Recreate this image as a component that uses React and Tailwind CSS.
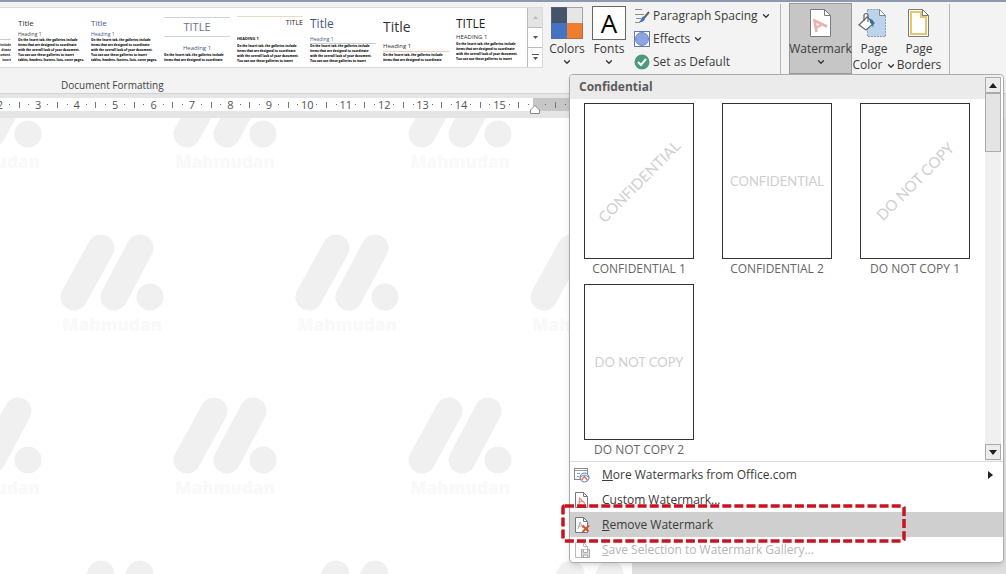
import { ChevronDown } from 'lucide-react';

const BODY = [
  'On the Insert tab, the galleries include',
  'items that are designed to coordinate',
  'with the overall look of your document.',
  'You can use these galleries to insert',
  'tables, headers, footers, lists, cover pages,',
];

const STYLES = [
  { title: 'Title', heading: 'Heading 1', lines: 5, titleCls: 'text-[8px] leading-[15px] text-[#333]', headCls: 'text-[5px] leading-[8px] text-[#444]', pad: 'pt-[3px]' },
  { title: 'Title', heading: 'Heading 1', lines: 5, titleCls: 'text-[8px] leading-[15px] text-[#44598a]', headCls: 'text-[5px] leading-[8px] text-[#44598a]', pad: 'pt-[3px]' },
  { title: 'TITLE', heading: 'Heading 1', lines: 2, titleCls: 'text-[11px] leading-[18px] text-center text-[#6b7384] border-y border-[#ccd3df]', headCls: 'text-[6px] leading-[10px] mt-[6px] text-center text-[#44598a]', pad: 'pt-[5px]' },
  { title: 'TITLE', heading: 'HEADING 1', lines: 4, titleCls: 'text-[7px] leading-[12px] text-right text-[#222] border-t border-[#e6dcc0]', headCls: 'text-[4px] leading-[6px] mt-[7px] mb-[2px] font-bold text-[#111]', pad: 'pt-[5px]' },
  { title: 'Title', heading: 'Heading 1', lines: 4, titleCls: 'text-[12px] leading-[20px] text-[#44598a]', headCls: 'text-[5px] leading-[8px] mt-[1px] text-[#44598a] border-b border-[#ccc]', pad: 'pt-[4px]' },
  { title: 'Title', heading: 'Heading 1', lines: 2, titleCls: 'text-[14px] leading-[20px] text-[#333]', headCls: 'text-[6px] leading-[10px] mt-[4px] mb-[1px] text-[#333] border-b border-[#eccdb8]', pad: 'pt-[5px]' },
  { title: 'TITLE', heading: 'HEADING 1', lines: 4, titleCls: 'text-[12px] leading-[16px] text-[#222]', headCls: 'text-[6px] leading-[10px] text-[#333]', pad: 'pt-[4px]' },
];

function Chevron() {
  return <ChevronDown size={10} strokeWidth={3} className="inline-block text-[#333]" />;
}

function StyleCard({ style }) {
  return (
    <button className={`block h-[58px] w-[66px] shrink-0 overflow-hidden text-left ${style.pad}`}>
      <div className={style.titleCls}>{style.title}</div>
      <div className={style.headCls}>{style.heading}</div>
      {BODY.slice(0, style.lines).map((line) => (
        <div key={line} className="text-[3px] leading-[5px] font-extrabold whitespace-nowrap text-[#111]">{line}</div>
      ))}
    </button>
  );
}

function Gallery() {
  return (
    <div className="mt-[5px] flex h-[61px] w-[543px] shrink-0 border border-l-0 border-[#dadada] bg-white">
      <div className="flex min-w-0 flex-1 gap-[7px] overflow-hidden">
        <div className="w-[11px] shrink-0 overflow-hidden pt-[31px]">
          <div className="border-t border-[#ccc] pt-[3px]">
            {['include', 'dinate', 'ument.', 'insert'].map((w) => (
              <div key={w} className="text-right text-[3px] leading-[5px] font-bold text-[#111]">{w}</div>
            ))}
          </div>
        </div>
        {STYLES.map((s, i) => <StyleCard key={i} style={s} />)}
      </div>
      <div className="flex w-[15px] flex-col divide-y divide-[#bbb] border-l border-[#bbb]">
        <button aria-label="Scroll up" className="flex flex-1 items-center justify-center bg-[#e4e4e4]">
          <svg width="5" height="3" viewBox="0 0 5 3"><path d="M0 3L2.5 0L5 3z" fill="#bbb" /></svg>
        </button>
        <button aria-label="Scroll down" className="flex flex-1 items-center justify-center">
          <svg width="5" height="3" viewBox="0 0 5 3"><path d="M0 0H5L2.5 3z" fill="#555" /></svg>
        </button>
        <button aria-label="More styles" className="flex flex-1 items-center justify-center">
          <svg width="7" height="7" viewBox="0 0 7 7"><path d="M0 0H7V1H0zM1 3H6L3.5 6z" fill="#555" /></svg>
        </button>
      </div>
    </div>
  );
}

function ColorsIcon() {
  return (
    <svg width="34" height="34" viewBox="0 0 34 34">
      <rect x="1" y="1" width="16" height="16" fill="#44546a" />
      <rect x="17" y="1" width="16" height="16" fill="#e7e6e6" />
      <rect x="1" y="17" width="16" height="16" fill="#4472c4" />
      <rect x="17" y="17" width="16" height="16" fill="#f07d2e" />
      <rect x="1.5" y="1.5" width="31" height="31" fill="none" stroke="#666b78" strokeOpacity=".55" />
    </svg>
  );
}

function PageShape({ fill }) {
  return (
    <>
      <path d="M6.500 3.500h14l6 6v21h-20z" fill={fill} stroke="#7a7a7a" />
      <path d="M20.500 3.500v6h6z" fill="#fff" stroke="#7a7a7a" />
    </>
  );
}

function WatermarkIcon() {
  return (
    <svg width="34" height="34" viewBox="0 0 34 34">
      <PageShape fill="#fff" />
      <path d="M12.500 26L10.500 14.500L23 20.500M12 22L18.500 18" fill="none" stroke="#e7b4ad" strokeWidth="2.600" />
    </svg>
  );
}

function PageColorIcon() {
  return (
    <svg width="34" height="34" viewBox="0 0 34 34">
      <path d="M10.500 3.500h12l6 6v21h-18z" fill="#bcd3ec" stroke="#8a9db5" strokeDasharray="2 1" />
      <path d="M22.500 3.500v6h6z" fill="#fff" stroke="#7a8797" />
      <path d="M2 19l8-8 7 6-8 7z" fill="#fff" stroke="#666" strokeWidth="1.200" />
      <path d="M7 15V9.500a2 2 0 0 1 4 0V16" fill="none" stroke="#666" strokeWidth="1.200" />
      <path d="M12.500 13c4 0 5 3 3.500 9c-.5-3-1-4-3-5z" fill="#2f6ea8" />
    </svg>
  );
}

function PageBordersIcon() {
  return (
    <svg width="34" height="34" viewBox="0 0 34 34">
      <PageShape fill="#fff" />
      <path d="M9 6h10v5h5v17H9z" fill="none" stroke="#e9c46f" strokeWidth="2" />
      <path d="M20.500 3.500v6h6z" fill="#fff" stroke="#7a7a7a" />
    </svg>
  );
}

function BigButton({ icon, children, className }) {
  return (
    <button className={`flex shrink-0 flex-col items-center text-[12px] leading-[16px] whitespace-nowrap text-[#3b3b3b] ${className}`}>
      {icon}
      {children}
    </button>
  );
}

function SmallButton({ icon, label, chevron }) {
  return (
    <button className="flex h-[23px] items-center gap-[3px] text-[12px] leading-[16px] whitespace-nowrap text-[#3b3b3b]">
      {icon}
      <span>{label}</span>
      {chevron && <Chevron />}
    </button>
  );
}

function Ribbon() {
  return (
    <header className="h-[94px] border-t-2 border-b border-t-[#8e99ae] border-b-[#d2d2d2] bg-[#f3f3f3]">
      <div className="flex h-[72px]">
        <Gallery />
        <BigButton className="ml-[4px] w-[40px] pt-[4px]" icon={<ColorsIcon />}>
          <span className="mt-[1px]">Colors</span>
          <Chevron />
        </BigButton>
        <BigButton
          className="ml-[2px] w-[40px] pt-[4px]"
          icon={<span className="flex size-[34px] items-center justify-center border border-[#666] bg-white text-[26px] leading-[30px] text-black">A</span>}
        >
          <span className="mt-[1px]">Fonts</span>
          <Chevron />
        </BigButton>
        <div className="ml-[5px] flex w-[146px] shrink-0 flex-col pt-[2px]">
          <SmallButton
            label="Paragraph Spacing"
            chevron
            icon={(
              <svg width="16" height="16" viewBox="0 0 16 16" fill="none">
                <path d="M1 1.500H8M1 6.500H10M2 10.500H7M1 14.500H6" stroke="#8c8c8c" />
                <path d="M15 4L10 10" stroke="#666" strokeWidth="2" />
                <path d="M11 9c1 3-3 6-6 5c2-1 2-4 4-5.500z" fill="#3f73b8" />
              </svg>
            )}
          />
          <SmallButton
            label="Effects"
            chevron
            icon={(
              <svg width="16" height="16" viewBox="0 0 16 16">
                <rect x=".5" y=".5" width="15" height="15" fill="#fff" stroke="#6779b5" />
                <circle cx="8" cy="8" r="6.500" fill="#8ea4e0" stroke="#6f86cc" />
              </svg>
            )}
          />
          <SmallButton
            label="Set as Default"
            icon={(
              <svg width="16" height="16" viewBox="0 0 16 16">
                <circle cx="8" cy="8" r="7.500" fill="#4c9a7c" />
                <path d="M4 8l3 3 5-6" fill="none" stroke="#fff" strokeWidth="2" />
              </svg>
            )}
          />
        </div>
        <div className="mt-[2px] w-px shrink-0 bg-[#b5b5b5]" />
        <BigButton className="ml-[8px] mt-px w-[63px] border border-[#9a9a9a] bg-[#c6c6c6] pt-[2px]" icon={<WatermarkIcon />}>
          <span className="mt-[1px]">Watermark</span>
          <Chevron />
        </BigButton>
        <BigButton className="w-[44px] pt-[4px]" icon={<PageColorIcon />}>
          <span className="mt-[1px]">Page</span>
          <span>Color <Chevron /></span>
        </BigButton>
        <BigButton className="w-[46px] pt-[4px]" icon={<PageBordersIcon />}>
          <span className="mt-[1px]">Page</span>
          <span>Borders</span>
        </BigButton>
        <div className="ml-[7px] mt-[2px] w-px shrink-0 bg-[#b5b5b5]" />
      </div>
      <div className="mt-[3px] pl-[61px] text-[10px] leading-[16px] text-[#444]">Document Formatting</div>
    </header>
  );
}

function RulerMark({ index }) {
  const step = index % 4;
  return (
    <span className="flex min-w-0 flex-1 items-center justify-center">
      {step === 0 && <span>{2 + index / 4}</span>}
      {step === 2 && <span className="h-[6px] w-px bg-[#777]" />}
      {step % 2 === 1 && <span className="size-px bg-[#666]" />}
    </span>
  );
}

function Ruler() {
  return (
    <div className="flex h-[24px] overflow-hidden bg-[#e5e5e5] pt-[4px] pb-[7px] text-[11px] leading-[13px] text-[#555]">
      <div className="-ml-[5px] flex w-[538px] shrink-0 bg-white">
        {Array.from({ length: 56 }, (_, i) => <RulerMark key={i} index={i} />)}
      </div>
      <div className="flex w-[99px] shrink-0 bg-[#c6c6c6]">
        <svg width="10" height="17" viewBox="0 0 10 17" className="-ml-[3px] shrink-0">
          <path d="M.5 15.500V12L5 7.500L9.500 12V15.500z" fill="#fff" stroke="#888" />
        </svg>
        {[57, 58, 59, 61, 62, 63, 65, 66, 67].map((i) => <RulerMark key={i} index={i} />)}
      </div>
    </div>
  );
}

function BrandMark() {
  return (
    <div className="w-[104px] shrink-0 text-center">
      <svg width="104" height="80" viewBox="0 0 104 80" className="block">
        <g stroke="#f0f0f0" strokeWidth="27" strokeLinecap="round">
          <path d="M14 63L41 14M54 63L80 14" />
        </g>
        <circle cx="90" cy="63" r="13.500" fill="#f0f0f0" />
      </svg>
      <div className="text-[17px] leading-[22px] font-extrabold text-[#f9f9f9]">Mahmudan</div>
    </div>
  );
}

function Document() {
  return (
    <main className="flex flex-1 bg-[#dfdfdf]">
      <div className="relative w-[632px] shrink-0 overflow-hidden bg-white">
        <div className="absolute inset-x-0 -top-[47px] flex flex-col gap-[61px]">
          {['-ml-[62px]', 'ml-[60px]', '-ml-[62px]', 'ml-[60px]'].map((indent, i) => (
            <div key={i} className={`flex gap-[131px] ${indent}`}>
              <BrandMark />
              <BrandMark />
              <BrandMark />
            </div>
          ))}
        </div>
      </div>
    </main>
  );
}

const WATERMARKS = [
  { name: 'CONFIDENTIAL 1', text: 'CONFIDENTIAL', diagonal: true },
  { name: 'CONFIDENTIAL 2', text: 'CONFIDENTIAL' },
  { name: 'DO NOT COPY 1', text: 'DO NOT COPY', diagonal: true },
  { name: 'DO NOT COPY 2', text: 'DO NOT COPY' },
];

function Thumb({ item }) {
  return (
    <button className="flex flex-col items-center text-[12px] leading-[19px] text-[#666]">
      <span className="flex h-[156px] w-[110px] items-center justify-center border border-[#333] bg-white">
        <span className={`font-['Lato',sans-serif] whitespace-nowrap text-[#cfcfcf] ${item.diagonal ? '-rotate-45 text-[15px]' : 'text-[13px]'}`}>
          {item.text}
        </span>
      </span>
      {item.name}
    </button>
  );
}

function MenuPage({ children, muted }) {
  return (
    <svg width="16" height="16" viewBox="0 0 16 16" fill="none" className="shrink-0">
      <path d="M1.500 .5h8l4 4v11h-12z" fill="#fff" stroke={muted ? '#bbb' : '#777'} />
      <path d="M9.500 .5v4h4" stroke={muted ? '#bbb' : '#777'} />
      {children}
    </svg>
  );
}

const OfficeIcon = (
  <svg width="16" height="16" viewBox="0 0 16 16" fill="none" className="shrink-0">
    <rect x=".5" y="1.500" width="13" height="11" fill="#fff" stroke="#888" />
    <path d="M1 3.500H13M3 6.500H6M3 9.500H5" stroke="#9a9a9a" />
    <circle cx="10.500" cy="10.500" r="4.500" fill="#fff" stroke="#4a7ebb" />
    <path d="M6 10.500c3-3 6-3 9 0" stroke="#4a7ebb" />
    <path d="M7.500 13l3-3.500 3 4" stroke="#d87a68" strokeWidth="1.500" />
  </svg>
);

const MENU = [
  { key: 'M', rest: 'ore Watermarks from Office.com', icon: OfficeIcon, submenu: true },
  { key: 'C', rest: 'ustom Watermark...', icon: <MenuPage><path d="M5 13L5.500 6L11 11.500M5 10.500L8 9" stroke="#e08a80" strokeWidth="1.200" /></MenuPage> },
  {
    key: 'R',
    rest: 'emove Watermark',
    active: true,
    icon: <MenuPage><path d="M4 12L6 5L9 11M5 9H8" stroke="#aaa" /><path d="M8.500 8.500l6 6M15 8.500l-6.500 6.500" stroke="#d35230" strokeWidth="2" /></MenuPage>,
  },
  {
    key: 'S',
    rest: 'ave Selection to Watermark Gallery...',
    disabled: true,
    icon: <MenuPage muted><path d="M7.500 7.500h8v8h-8z" fill="#ddd" stroke="#aaa" /><path d="M9.500 7.500v3h4v-3M9.500 15v-2h4v2" fill="#fff" stroke="#aaa" /></MenuPage>,
  },
];

function WatermarkMenu() {
  return (
    <div className="absolute top-[74px] right-[2px] w-[435px] rounded-[4px] border border-[#ababab] bg-white shadow-md">
      <div className="flex border-b border-[#dcdcdc]">
        <div className="flex-1">
          <h2 className="rounded-tl-[3px] bg-[#ebebeb] pl-[9px] text-[12px] leading-[24px] font-bold text-[#5b5b5b]">Confidential</h2>
          <div className="grid w-fit grid-cols-3 gap-x-[28px] gap-y-[6px] pt-[4px] pb-[2px] pl-[14px]">
            {WATERMARKS.map((w) => <Thumb key={w.name} item={w} />)}
          </div>
        </div>
        <div className="mr-[2px] flex w-[16px] flex-col bg-[#f0f0f0] pt-[2px]">
          <button aria-label="Scroll up" className="flex h-[16px] items-center justify-center border border-[#aaa] bg-[#ececec]">
            <svg width="8" height="5" viewBox="0 0 8 5"><path d="M0 5L4 0L8 5z" fill="#222" /></svg>
          </button>
          <div className="h-[59px] border border-[#aaa] bg-[#e4e4e4]" />
          <button aria-label="Scroll down" className="mt-auto mb-px flex h-[16px] items-center justify-center border border-[#aaa] bg-[#ececec]">
            <svg width="8" height="5" viewBox="0 0 8 5"><path d="M0 0H8L4 5z" fill="#222" /></svg>
          </button>
        </div>
      </div>
      <div>
        {MENU.map((m) => (
          <button
            key={m.key}
            disabled={m.disabled}
            className={`flex h-[25px] w-full items-center gap-[12px] pr-[10px] pl-[4px] text-left text-[12px] ${m.active ? 'bg-[#cfcfcf]' : ''} ${m.disabled ? 'text-[#b5b5b5]' : 'text-[#3b3b3b]'}`}
          >
            {m.icon}
            <span className="flex-1 whitespace-nowrap"><u>{m.key}</u>{m.rest}</span>
            {m.submenu && <svg width="5" height="8" viewBox="0 0 5 8"><path d="M0 0L5 4L0 8z" fill="#222" /></svg>}
          </button>
        ))}
      </div>
      <svg width="346" height="41" viewBox="0 0 346 41" className="pointer-events-none absolute bottom-[17px] -left-[9px]">
        <rect x="2" y="2" width="341" height="35" rx="2" fill="none" stroke="#c8141e" strokeWidth="3.500" strokeDasharray="9 3.100" />
      </svg>
    </div>
  );
}

export default function App() {
  return (
    <div className="relative flex min-h-screen flex-col overflow-hidden font-['Open_Sans','Noto_Sans',sans-serif]">
      <Ribbon />
      <Ruler />
      <Document />
      <WatermarkMenu />
    </div>
  );
}
